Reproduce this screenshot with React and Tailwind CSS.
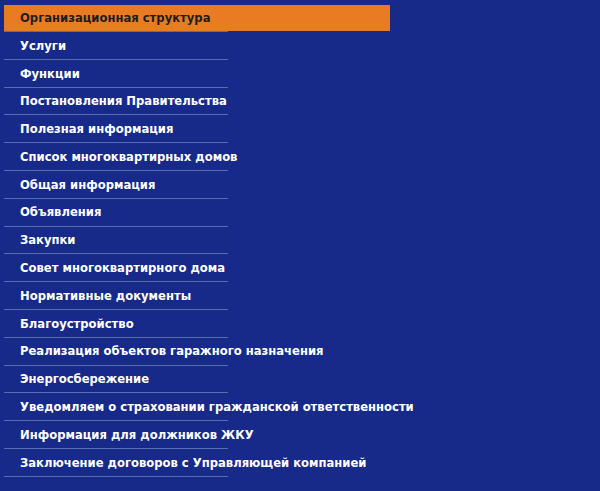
const items = [
  "Организационная структура",
  "Услуги",
  "Функции",
  "Постановления Правительства",
  "Полезная информация",
  "Список многоквартирных домов",
  "Общая информация",
  "Объявления",
  "Закупки",
  "Совет многоквартирного дома",
  "Нормативные документы",
  "Благоустройство",
  "Реализация объектов гаражного назначения",
  "Энергосбережение",
  "Уведомляем о страховании гражданской ответственности",
  "Информация для должников ЖКУ",
  "Заключение договоров с Управляющей компанией",
];

export default function App() {
  return (
    <div className="w-[600px] h-[491px] bg-[#172a8a] pt-[5px] pl-[4px] font-['DejaVu_Sans',sans-serif]">
      <ul className="flex flex-col">
        {items.map((item, i) => (
          <li key={i} className="w-[224px] border-b border-[#5a6cb0]">
            <a
              className={
                i === 0
                  ? "flex items-center w-[386px] h-[26px] pl-[16px] pt-[1px] bg-[#e97b22] text-[#1e1e1e] text-[11.6px] font-bold whitespace-nowrap"
                  : "flex items-center h-[26.8px] pl-[16px] pt-[2px] text-white text-[11.6px] font-bold whitespace-nowrap"
              }
            >
              {item}
            </a>
          </li>
        ))}
      </ul>
    </div>
  );
}
